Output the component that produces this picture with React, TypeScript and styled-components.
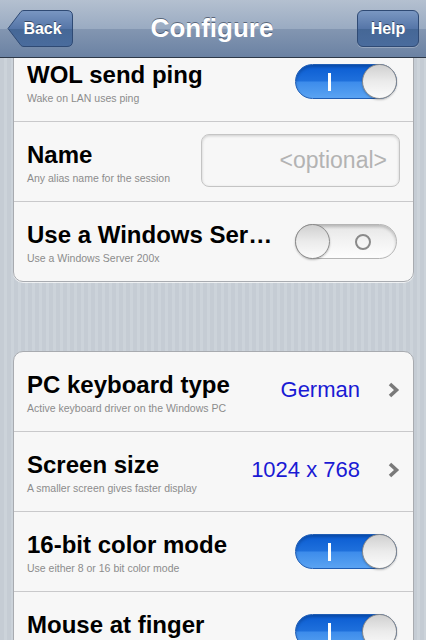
import styled, { createGlobalStyle } from 'styled-components';

const GlobalStyle = createGlobalStyle`
  html, body {
    margin: 0;
    padding: 0;
  }
  body {
    font-family: "Liberation Sans", Arial, Helvetica, sans-serif;
    background: #c6cdd5;
  }
`;

interface IToggleProps {
  on: boolean;
}

type Row =
  | { kind: 'toggle'; title: string; sub: string; on: boolean }
  | { kind: 'field'; title: string; sub: string; placeholder: string }
  | { kind: 'value'; title: string; sub: string; value: string };

const firstGroup: Row[] = [
  { kind: 'toggle', title: 'WOL send ping', sub: 'Wake on LAN uses ping', on: true },
  { kind: 'field', title: 'Name', sub: 'Any alias name for the session', placeholder: '<optional>' },
  { kind: 'toggle', title: 'Use a Windows Server', sub: 'Use a Windows Server 200x', on: false },
];

const secondGroup: Row[] = [
  { kind: 'value', title: 'PC keyboard type', sub: 'Active keyboard driver on the Windows PC', value: 'German' },
  { kind: 'value', title: 'Screen size', sub: 'A smaller screen gives faster display', value: '1024 x 768' },
  { kind: 'toggle', title: '16-bit color mode', sub: 'Use either 8 or 16 bit color mode', on: true },
  { kind: 'toggle', title: 'Mouse at finger', sub: 'Mouse pointer follows the finger', on: true },
];

function Toggle({ on }: IToggleProps) {
  return (
    <Track on={on}>
      <Knob />
      <Mark>{on ? <OnBar /> : <OffRing />}</Mark>
    </Track>
  );
}

function Chevron() {
  return (
    <svg width="13" height="18" viewBox="0 0 13 18">
      <polyline points="3,3 9.5,9 3,15" fill="none" stroke="#7a7a7a" strokeWidth="3.6" strokeLinejoin="miter" />
    </svg>
  );
}

function SettingRow({ row }: { row: Row }) {
  return (
    <RowBox>
      <Label>
        <Title>{row.title}</Title>
        <Sub>{row.sub}</Sub>
      </Label>
      {row.kind === 'toggle' && <Toggle on={row.on} />}
      {row.kind === 'field' && <Field placeholder={row.placeholder} />}
      {row.kind === 'value' && (
        <ValueBox>
          <Value>{row.value}</Value>
          <Chevron />
        </ValueBox>
      )}
    </RowBox>
  );
}

function BackShape() {
  return (
    <ShapeSvg viewBox="0 0 66 37" preserveAspectRatio="none">
      <defs>
        <linearGradient id="btnGrad" x1="0" y1="0" x2="0" y2="1">
          <stop offset="0" stopColor="#7a97c2" />
          <stop offset="0.5" stopColor="#5676a8" />
          <stop offset="0.51" stopColor="#456796" />
          <stop offset="1" stopColor="#4a6c9d" />
        </linearGradient>
      </defs>
      <path
        d="M1 18.5 L14 1.5 Q15 0.5 17 0.5 L60 0.5 Q65.5 0.5 65.5 6 L65.5 31 Q65.5 36.5 60 36.5 L17 36.5 Q15 36.5 14 35.5 Z"
        fill="url(#btnGrad)"
        stroke="#2f4a74"
        strokeWidth="1"
      />
    </ShapeSvg>
  );
}

export default function App() {
  return (
    <>
      <GlobalStyle />
      <Screen>
        <NavBar>
          <BackButton type="button">
            <BackShape />
            <BtnText>Back</BtnText>
          </BackButton>
          <NavTitle>Configure</NavTitle>
          <NavButton type="button">Help</NavButton>
        </NavBar>
        <Scroll>
          <Card first>
            {firstGroup.map((row) => (
              <SettingRow key={row.title} row={row} />
            ))}
          </Card>
          <Card>
            {secondGroup.map((row) => (
              <SettingRow key={row.title} row={row} />
            ))}
          </Card>
        </Scroll>
      </Screen>
    </>
  );
}

const Screen = styled.div`
  width: 426px;
  height: 640px;
  display: flex;
  flex-direction: column;
  overflow: hidden;
  background: repeating-linear-gradient(90deg, #c5ccd4 0 4px, #ccd3da 4px 7px);
`;

const NavBar = styled.div`
  height: 57px;
  flex-shrink: 0;
  display: flex;
  align-items: center;
  justify-content: space-between;
  padding: 0 7px;
  box-sizing: content-box;
  border-bottom: 1px solid #2d3848;
  background: linear-gradient(180deg, #b4c0d0 0%, #9aabc2 50%, #8396b1 51%, #6b82a3 100%);
`;

const BackButton = styled.button`
  position: relative;
  width: 66px;
  height: 37px;
  padding: 0 0 0 5px;
  border: 0;
  background: none;
  display: flex;
  align-items: center;
  justify-content: center;
`;

const ShapeSvg = styled.svg`
  position: absolute;
  inset: 0;
  width: 100%;
  height: 100%;
`;

const BtnText = styled.span`
  position: relative;
  font-family: "Liberation Sans", Arial, sans-serif;
  font-weight: bold;
  font-size: 16px;
  color: #fff;
  text-shadow: 0 -1px 0 rgba(0, 0, 0, 0.45);
`;

const NavTitle = styled.div`
  font-weight: bold;
  font-size: 26px;
  color: #fff;
  text-shadow: 0 -1px 0 rgba(40, 50, 70, 0.6);
  margin-right: 6px;
`;

const NavButton = styled.button`
  width: 62px;
  height: 37px;
  border: 1px solid #2f4a74;
  border-radius: 6px;
  font-family: "Liberation Sans", Arial, sans-serif;
  font-weight: bold;
  font-size: 16px;
  color: #fff;
  text-shadow: 0 -1px 0 rgba(0, 0, 0, 0.45);
  background: linear-gradient(180deg, #7a97c2 0%, #5676a8 50%, #456796 51%, #4a6c9d 100%);
  box-shadow: 0 1px 0 rgba(255, 255, 255, 0.25);
`;

const Scroll = styled.div`
  flex: 1;
  overflow: hidden;
`;

const Card = styled.div<{ first?: boolean }>`
  margin: ${(p) => (p.first ? '-17px' : '69px')} 12px 0 13px;
  background: #f7f7f7;
  border: 1px solid #a8abb0;
  border-radius: 10px;
  box-shadow: 0 1px 0 rgba(255, 255, 255, 0.7);
  overflow: hidden;
`;

const RowBox = styled.div`
  height: 79px;
  display: flex;
  align-items: center;
  gap: 18px;
  padding: 0 16px 0 13px;
  border-bottom: 1px solid #c9c9cb;
  &:last-child {
    border-bottom: 0;
  }
`;

const Label = styled.div`
  flex: 1;
  min-width: 0;
  align-self: flex-start;
  padding-top: 20px;
`;

const Title = styled.div`
  font-weight: bold;
  font-size: 24px;
  line-height: 26px;
  color: #000;
  white-space: nowrap;
  overflow: hidden;
  text-overflow: ellipsis;
`;

const Sub = styled.div`
  margin-top: 4px;
  font-size: 10.5px;
  line-height: 12px;
  color: #8c8c8c;
  white-space: nowrap;
`;

const Track = styled.div<IToggleProps>`
  width: 102px;
  height: 35px;
  flex-shrink: 0;
  box-sizing: border-box;
  display: flex;
  flex-direction: ${(p) => (p.on ? 'row-reverse' : 'row')};
  align-items: center;
  border-radius: 18px;
  border: 1px solid ${(p) => (p.on ? '#1f5db4' : '#b5b5b5')};
  background: ${(p) =>
    p.on
      ? 'linear-gradient(180deg, #0a5cd2 0%, #1f70dc 48%, #3d8ceb 52%, #5aa3f2 100%)'
      : 'linear-gradient(180deg, #e6e6e6 0%, #f3f3f3 50%, #fdfdfd 100%)'};
  box-shadow: inset 0 2px 3px rgba(0, 0, 0, 0.2);
`;

const Knob = styled.div`
  width: 35px;
  height: 35px;
  margin: -1px;
  flex-shrink: 0;
  box-sizing: border-box;
  border-radius: 50%;
  border: 1px solid #8a8a8a;
  background: linear-gradient(180deg, #d0d0d0 0%, #ebebeb 50%, #fbfbfb 100%);
  box-shadow: 0 1px 2px rgba(0, 0, 0, 0.25);
`;

const Mark = styled.div`
  flex: 1;
  display: flex;
  align-items: center;
  justify-content: center;
`;

const OnBar = styled.div`
  width: 3px;
  height: 18px;
  background: #fff;
`;

const OffRing = styled.div`
  width: 12px;
  height: 12px;
  border-radius: 50%;
  border: 2.5px solid #8a8a8a;
`;

const Field = styled.input`
  width: 199px;
  height: 53px;
  margin-right: -3px;
  margin-top: -3px;
  flex-shrink: 0;
  box-sizing: border-box;
  border: 1px solid #c4c4c4;
  border-radius: 8px;
  background: #f7f7f7;
  box-shadow: inset 0 1px 3px rgba(0, 0, 0, 0.18);
  padding: 0 12px;
  text-align: right;
  font-family: "Liberation Sans", Arial, sans-serif;
  font-size: 23px;
  outline: none;
  &::placeholder {
    color: #b3b3b3;
  }
`;

const ValueBox = styled.div`
  display: flex;
  align-items: center;
  gap: 27px;
  flex-shrink: 0;
  margin-right: -3px;
  margin-top: -4px;
`;

const Value = styled.div`
  font-size: 22px;
  color: #1a1ad4;
`;
